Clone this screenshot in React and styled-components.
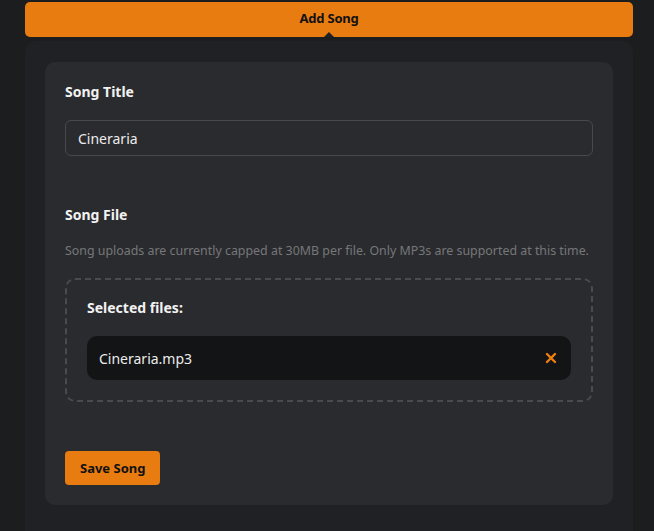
import styled, { createGlobalStyle } from 'styled-components';

const GlobalStyle = createGlobalStyle`
  html, body {
    margin: 0;
    padding: 0;
    background: #1c1d1f;
  }
  * {
    box-sizing: border-box;
  }
`;

export default function App() {
  return (
    <>
      <GlobalStyle />
      <Page>
        <Tab>
          Add Song
          <Caret />
        </Tab>
        <Panel>
          <Card>
            <Field>
              <Label>Song Title</Label>
              <TextInput defaultValue='Cineraria' />
            </Field>

            <Field>
              <Label>Song File</Label>
              <Hint>
                Song uploads are currently capped at 30MB per file. Only MP3s
                are supported at this time.
              </Hint>
              <DropZone>
                <DropTitle>Selected files:</DropTitle>
                <FileRow>
                  <FileName>Cineraria.mp3</FileName>
                  <RemoveButton aria-label='Remove file'>
                    <svg width='12' height='12' viewBox='0 0 12 12'>
                      <path
                        d='M2 2 L10 10 M10 2 L2 10'
                        stroke='#f07f10'
                        strokeWidth='2.4'
                        strokeLinecap='round'
                      />
                    </svg>
                  </RemoveButton>
                </FileRow>
              </DropZone>
            </Field>

            <SaveButton>Save Song</SaveButton>
          </Card>
        </Panel>
      </Page>
    </>
  );
}

/**
 * STYLED COMPONENTS
 */
const Page = styled.div`
  width: 654px;
  height: 531px;
  padding: 2px 21px 0 25px;
  display: flex;
  flex-direction: column;
  gap: 4px;
  overflow: hidden;
  font-family: 'Noto Sans', 'Open Sans', sans-serif;
`;

const Tab = styled.div`
  position: relative;
  height: 35px;
  padding-bottom: 4px;
  background: #e87c10;
  border-radius: 5px;
  display: flex;
  align-items: center;
  justify-content: center;
  color: #111;
  font-size: 13px;
  font-weight: 700;
  letter-spacing: -0.2px;
`;

const Caret = styled.span`
  position: absolute;
  left: 50%;
  bottom: 0;
  transform: translateX(-50%);
  width: 0;
  height: 0;
  border-left: 5px solid transparent;
  border-right: 5px solid transparent;
  border-bottom: 5px solid #202124;
`;

const Panel = styled.div`
  flex: 1;
  background: #202124;
  border-radius: 10px 10px 0 0;
  padding: 21px 20px 20px;
`;

const Card = styled.div`
  background: #2a2b2e;
  border-radius: 10px;
  padding: 20px 20px 20px;
  display: flex;
  flex-direction: column;
  align-items: flex-start;
  gap: 49px;
`;

const Field = styled.div`
  width: 100%;
  display: flex;
  flex-direction: column;
`;

const Label = styled.div`
  color: #f2f2f2;
  font-size: 14px;
  font-weight: 700;
  line-height: 20px;
  margin-bottom: 18px;
`;

const TextInput = styled.input`
  height: 36px;
  width: 100%;
  background: transparent;
  border: 1px solid #48494c;
  border-radius: 6px;
  padding: 0 12px;
  color: #ececec;
  font-family: inherit;
  font-size: 14px;
  outline: none;
`;

const Hint = styled.p`
  margin: -1px 0 18px;
  color: #76777a;
  font-size: 12.4px;
  line-height: 18px;
`;

const DropZone = styled.div`
  border: 2px dashed #4a4b4f;
  border-radius: 10px;
  padding: 18px 20px 20px;
  display: flex;
  flex-direction: column;
`;

const DropTitle = styled.div`
  color: #f2f2f2;
  font-size: 14px;
  font-weight: 700;
  line-height: 20px;
  margin-bottom: 18px;
`;

const FileRow = styled.div`
  height: 44px;
  background: #131416;
  border-radius: 10px;
  padding: 0 14px 0 12px;
  display: flex;
  align-items: center;
  justify-content: space-between;
`;

const FileName = styled.span`
  color: #ececec;
  font-size: 14px;
`;

const RemoveButton = styled.button`
  background: none;
  border: 0;
  padding: 0;
  display: flex;
  cursor: pointer;
`;

const SaveButton = styled.button`
  height: 34px;
  padding: 0 15px;
  border: 0;
  border-radius: 4px;
  background: #e87c10;
  color: #111;
  font-family: inherit;
  font-size: 13px;
  font-weight: 700;
  cursor: pointer;
`;
